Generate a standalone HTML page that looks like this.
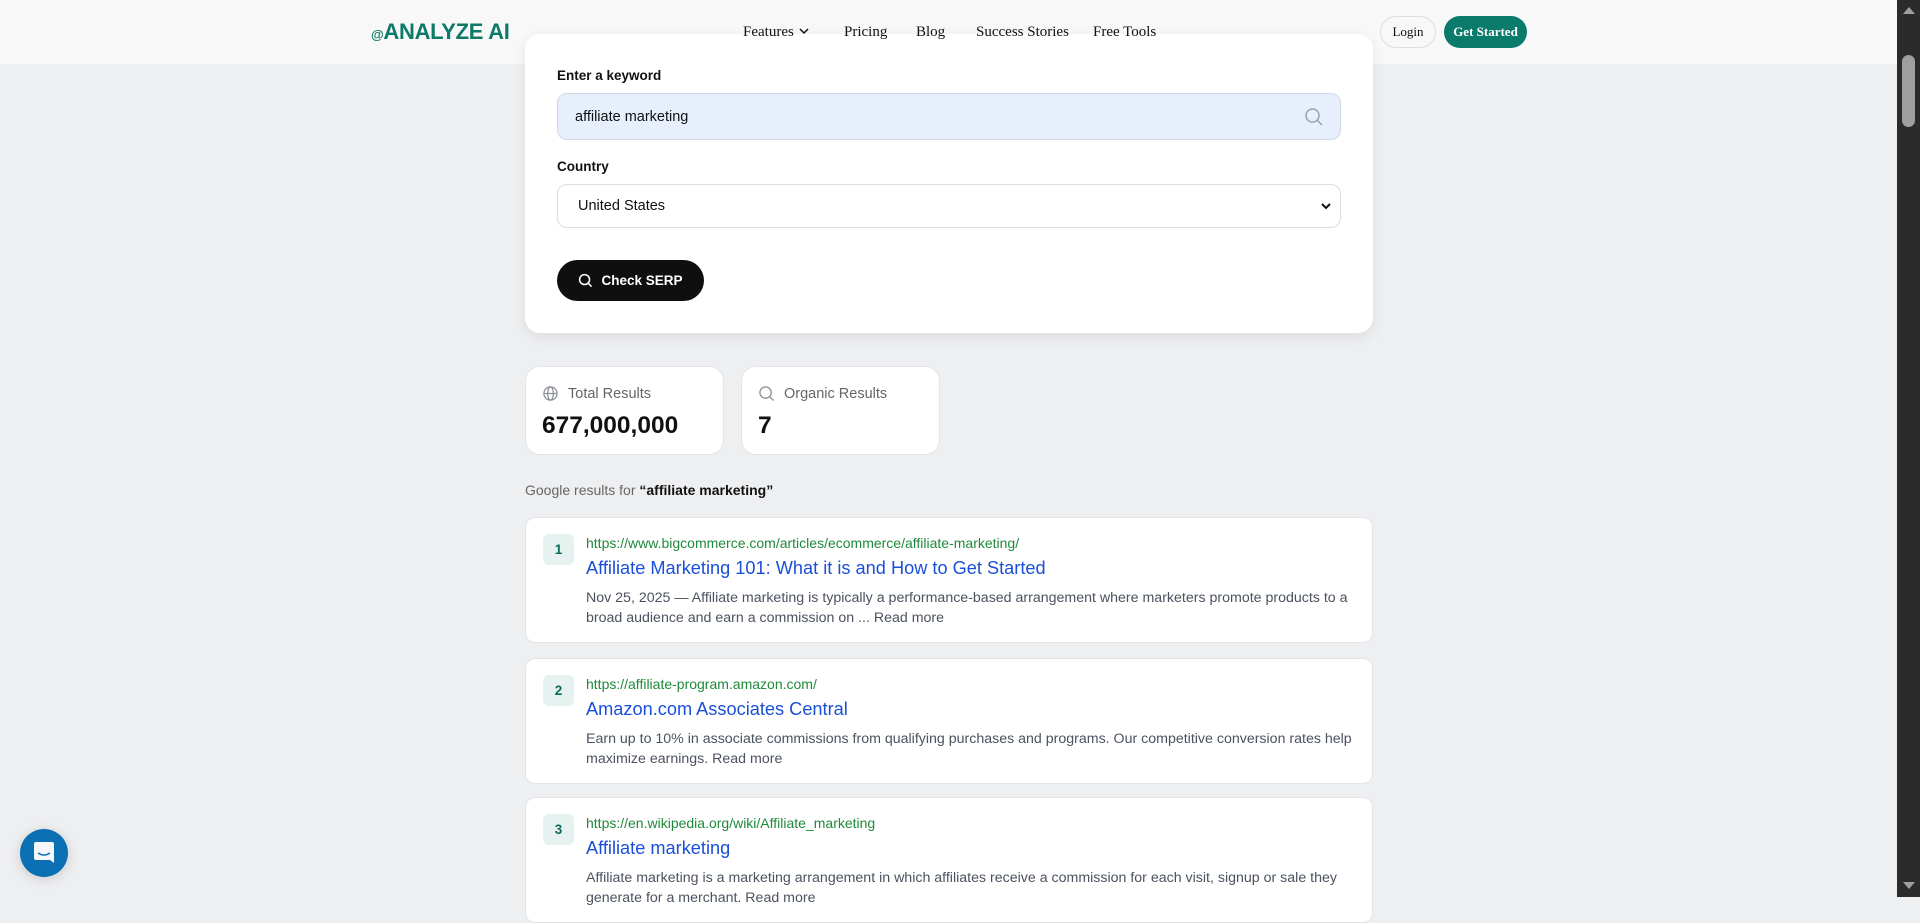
<!DOCTYPE html>
<html><head><meta charset="utf-8"><style>
*{box-sizing:border-box;margin:0;padding:0}
body{width:1920px;height:897px;overflow:hidden;background:#eeeff1;font-family:"Liberation Sans",Arial,sans-serif;position:relative}
.nav{position:absolute;left:0;top:0;width:1897px;height:64px;background:#f8f8f8}
.logo{position:absolute;left:371px;top:19px;font-size:22px;font-weight:bold;color:#0d7a68;letter-spacing:-0.3px}
.logo small{font-size:13px}
.nl{position:absolute;top:24px;font-family:"Liberation Serif",serif;font-size:15px;color:#111;z-index:5}
.btn{position:absolute;top:16px;height:32px;border-radius:16px;font-family:"Liberation Serif",serif;font-size:13px;display:flex;align-items:center;justify-content:center}
.card{position:absolute;background:#fff;border-radius:15px}
.main{left:525px;top:34px;width:848px;height:299px;box-shadow:0 4px 14px rgba(0,0,0,.08);z-index:1}
.lbl{position:absolute;left:32px;font-size:13.5px;font-weight:bold;color:#111}
.inp{position:absolute;left:32px;width:784px;border-radius:10px;font-size:14.5px;color:#111;padding-left:17px;display:flex;align-items:center}
.stat{top:366px;width:199px;height:89px;border:1px solid #e3e4e7}
.stat .t{position:absolute;left:42px;top:19px;font-size:14.5px;color:#666}
.stat .n{position:absolute;left:16px;top:45px;font-size:24.5px;font-weight:bold;color:#111}
.res{left:525px;width:848px;border:1px solid #e3e4e7;border-radius:10px}
.badge{position:absolute;left:17px;top:16px;width:31px;height:31px;border-radius:6px;background:#e6f2ef;color:#0d6b5c;font-size:13.5px;font-weight:bold;display:flex;align-items:center;justify-content:center}
.url{position:absolute;left:60px;top:17px;font-size:14px;color:#1f8a3b}
.ttl{position:absolute;left:60px;top:40px;font-size:18.2px;color:#1a4fd8}
.sn{position:absolute;left:60px;top:70px;width:770px;font-size:14.2px;line-height:20px;color:#4b5260}
</style></head><body>
<div class="nav">
<div class="logo"><small>@</small>ANALYZE AI</div>
<div class="btn" style="left:1380px;width:56px;border:1px solid #ddd;background:#f8f8f8;color:#111">Login</div>
<div class="btn" style="left:1444px;width:83px;background:#0a7a6a;color:#fff;font-weight:bold">Get Started</div>
</div>
<div class="nl" style="left:743px">Features <svg width="12" height="10" viewBox="0 0 12 10"><path d="M2 3l4 4 4-4" fill="none" stroke="#111" stroke-width="1.5"/></svg></div>
<div class="nl" style="left:844px">Pricing</div>
<div class="nl" style="left:916px">Blog</div>
<div class="nl" style="left:976px">Success Stories</div>
<div class="nl" style="left:1093px">Free Tools</div>
<div class="card main">
<div class="lbl" style="top:34px">Enter a keyword</div>
<div class="inp" style="top:59px;height:47px;background:#e8effc;border:1px solid #cfd8e6">affiliate marketing
<svg style="position:absolute;right:16px;top:13px" width="20" height="20" viewBox="0 0 20 20"><circle cx="8.5" cy="8.5" r="6.5" fill="none" stroke="#9aa0a8" stroke-width="1.5"/><path d="M13.5 13.5l4.5 4.5" stroke="#9aa0a8" stroke-width="1.5"/></svg></div>
<div class="lbl" style="top:125px">Country</div>
<div class="inp" style="top:150px;height:44px;border:1px solid #dcdde0;padding-left:20px">United States
<svg style="position:absolute;right:8px;top:16px" width="12" height="10" viewBox="0 0 12 10"><path d="M2 3l4 4 4-4" fill="none" stroke="#111" stroke-width="2"/></svg></div>
<div style="position:absolute;left:32px;top:226px;width:147px;height:41px;border-radius:21px;background:#0f0f0f;color:#fff;font-size:13.5px;font-weight:bold;display:flex;align-items:center;justify-content:center;gap:8px">
<svg width="15" height="15" viewBox="0 0 16 16"><circle cx="7" cy="7" r="5.3" fill="none" stroke="#fff" stroke-width="1.6"/><path d="M11 11l3.5 3.5" stroke="#fff" stroke-width="1.6"/></svg>Check SERP</div>
</div>
<div class="card stat" style="left:525px">
<svg style="position:absolute;left:16px;top:18px" width="17" height="17" viewBox="0 0 18 18" fill="none" stroke="#8a8f98" stroke-width="1.3"><circle cx="9" cy="9" r="7"/><ellipse cx="9" cy="9" rx="3" ry="7"/><path d="M2 9h14"/></svg>
<div class="t">Total Results</div><div class="n">677,000,000</div></div>
<div class="card stat" style="left:741px">
<svg style="position:absolute;left:16px;top:18px" width="17" height="17" viewBox="0 0 18 18" fill="none" stroke="#8a8f98" stroke-width="1.4"><circle cx="8" cy="8" r="6"/><path d="M12.5 12.5l4 4"/></svg>
<div class="t">Organic Results</div><div class="n">7</div></div>
<div style="position:absolute;left:525px;top:482px;font-size:14px;color:#666">Google results for <b style="color:#111">“affiliate marketing”</b></div>
<div class="card res" style="top:517px;height:126px"><div class="badge">1</div>
<div class="url">https://www.bigcommerce.com/articles/ecommerce/affiliate-marketing/</div>
<div class="ttl">Affiliate Marketing 101: What it is and How to Get Started</div>
<div class="sn">Nov 25, 2025 — Affiliate marketing is typically a performance-based arrangement where marketers promote products to a broad audience and earn a commission on ... Read more</div></div>
<div class="card res" style="top:658px;height:126px"><div class="badge">2</div>
<div class="url">https://affiliate-program.amazon.com/</div>
<div class="ttl">Amazon.com Associates Central</div>
<div class="sn">Earn up to 10% in associate commissions from qualifying purchases and programs. Our competitive conversion rates help maximize earnings. Read more</div></div>
<div class="card res" style="top:797px;height:126px"><div class="badge">3</div>
<div class="url">https://en.wikipedia.org/wiki/Affiliate_marketing</div>
<div class="ttl">Affiliate marketing</div>
<div class="sn">Affiliate marketing is a marketing arrangement in which affiliates receive a commission for each visit, signup or sale they generate for a merchant. Read more</div></div>
<div style="position:absolute;left:20px;top:829px;width:48px;height:48px;border-radius:50%;background:#0a6fb3;box-shadow:0 2px 12px rgba(0,0,0,.15)">
<svg style="position:absolute;left:13px;top:12px" width="22" height="24" viewBox="0 0 22 24"><path d="M3 1h16a2 2 0 0 1 2 2v19l-4-3H3a2 2 0 0 1-2-2V3a2 2 0 0 1 2-2z" fill="#f4f6f9"/><path d="M5 12q6 4 12 0" fill="none" stroke="#0a6fb3" stroke-width="1.5"/></svg></div>
<div style="position:absolute;left:1897px;top:0;width:23px;height:897px;background:#2b2b2b">
<div style="position:absolute;left:5px;top:55px;width:13px;height:72px;border-radius:7px;background:#9f9f9f"></div>
<div style="position:absolute;left:6px;top:7px;width:0;height:0;border-left:6px solid transparent;border-right:6px solid transparent;border-bottom:7px solid #9f9f9f"></div>
<div style="position:absolute;left:6px;top:882px;width:0;height:0;border-left:6px solid transparent;border-right:6px solid transparent;border-top:7px solid #9f9f9f"></div>
</div>
</body></html>
